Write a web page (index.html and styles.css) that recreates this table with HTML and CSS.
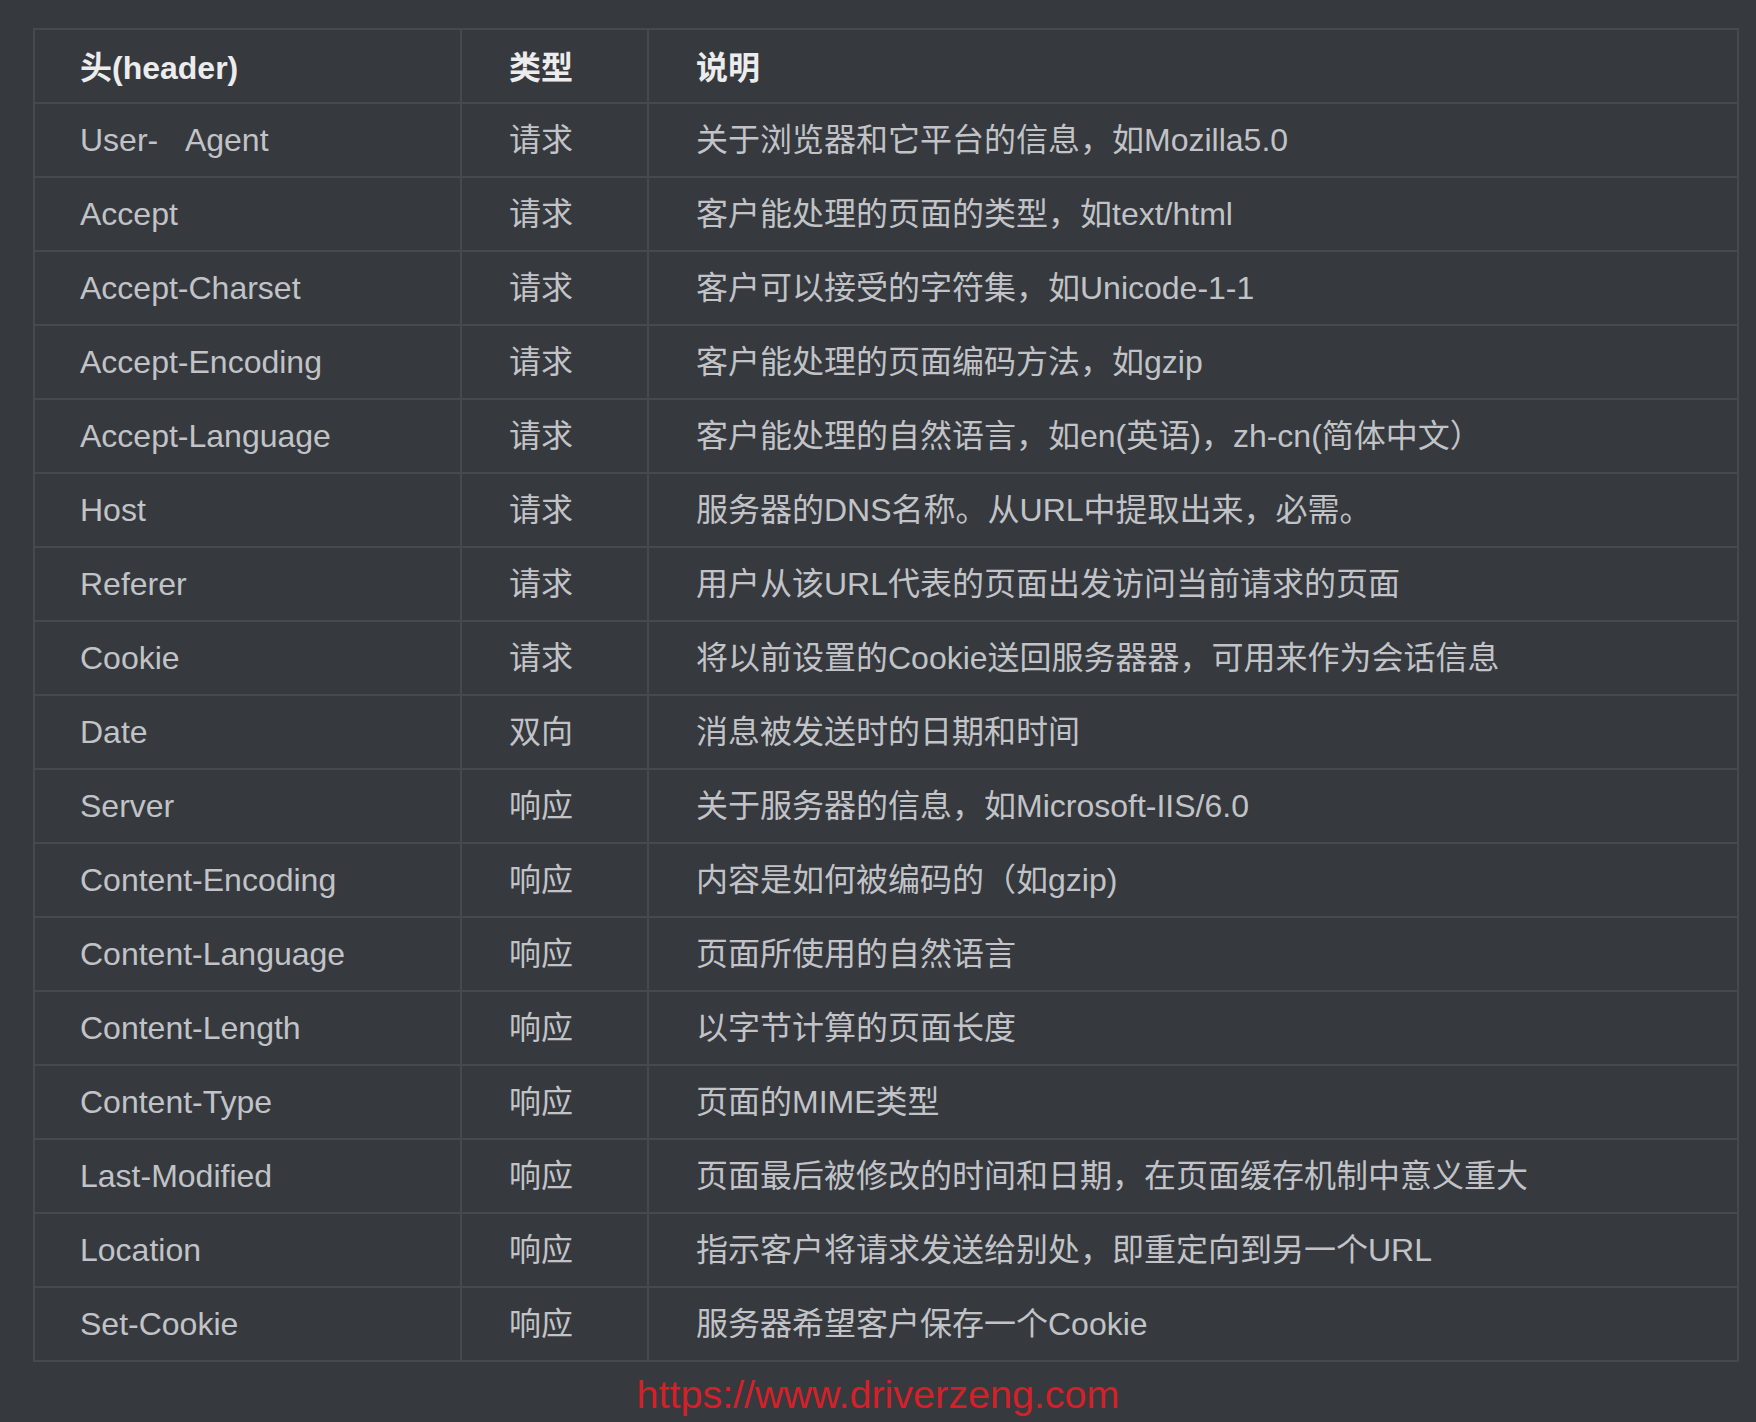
FILE: index.html
```html
<!DOCTYPE html>
<html lang="zh-CN">
<head>
<meta charset="utf-8">
<title>HTTP 头</title>
<link rel="stylesheet" href="styles.css">
</head>
<body>
<div class="page">
  <table class="headers">
    <colgroup>
      <col class="c1"><col class="c2"><col class="c3">
    </colgroup>
    <thead>
      <tr><th>头(header)</th><th>类型</th><th>说明</th></tr>
    </thead>
    <tbody>
      <tr><td>User-&nbsp;&nbsp;&nbsp;Agent</td><td>请求</td><td>关于浏览器和它平台的信息，如Mozilla5.0</td></tr>
      <tr><td>Accept</td><td>请求</td><td>客户能处理的页面的类型，如text/html</td></tr>
      <tr><td>Accept-Charset</td><td>请求</td><td>客户可以接受的字符集，如Unicode-1-1</td></tr>
      <tr><td>Accept-Encoding</td><td>请求</td><td>客户能处理的页面编码方法，如gzip</td></tr>
      <tr><td>Accept-Language</td><td>请求</td><td>客户能处理的自然语言，如en(英语)，zh-cn(简体中文）</td></tr>
      <tr><td>Host</td><td>请求</td><td>服务器的DNS名称。从URL中提取出来，必需。</td></tr>
      <tr><td>Referer</td><td>请求</td><td>用户从该URL代表的页面出发访问当前请求的页面</td></tr>
      <tr><td>Cookie</td><td>请求</td><td>将以前设置的Cookie送回服务器器，可用来作为会话信息</td></tr>
      <tr><td>Date</td><td>双向</td><td>消息被发送时的日期和时间</td></tr>
      <tr><td>Server</td><td>响应</td><td>关于服务器的信息，如Microsoft-IIS/6.0</td></tr>
      <tr><td>Content-Encoding</td><td>响应</td><td>内容是如何被编码的（如gzip)</td></tr>
      <tr><td>Content-Language</td><td>响应</td><td>页面所使用的自然语言</td></tr>
      <tr><td>Content-Length</td><td>响应</td><td>以字节计算的页面长度</td></tr>
      <tr><td>Content-Type</td><td>响应</td><td>页面的MIME类型</td></tr>
      <tr><td>Last-Modified</td><td>响应</td><td>页面最后被修改的时间和日期，在页面缓存机制中意义重大</td></tr>
      <tr><td>Location</td><td>响应</td><td>指示客户将请求发送给别处，即重定向到另一个URL</td></tr>
      <tr><td>Set-Cookie</td><td>响应</td><td>服务器希望客户保存一个Cookie</td></tr>
    </tbody>
  </table>
</div>
<div class="watermark">https://www.driverzeng.com</div>
</body>
</html>
```
FILE: styles.css
```css
html, body {
  margin: 0;
  padding: 0;
  background: #36393e;
}
body {
  font-family: "Liberation Sans", "Noto Sans CJK SC", sans-serif;
  width: 1756px;
  height: 1422px;
  overflow: hidden;
}
.page {
  padding: 28px 0 0 33px;
}
.headers {
  border-collapse: collapse;
  width: 1706px;
  table-layout: fixed;
}
.c1 { width: 427px; }
.c2 { width: 187px; }
.c3 { width: auto; }
.headers th,
.headers td {
  border: 2px solid #46494f;
  height: 74px;
  padding: 0 0 0 47px;
  text-align: left;
  vertical-align: middle;
  font-size: 32px;
  line-height: 40px;
  white-space: nowrap;
  box-sizing: border-box;
}
.headers th:first-child,
.headers td:first-child {
  padding-left: 45px;
}
.headers th {
  color: #ececec;
  font-weight: bold;
  padding-top: 4px;
}
.headers td {
  color: #c1c3c7;
  font-weight: normal;
}
.watermark {
  margin-top: 10px;
  text-align: center;
  font-size: 39.5px;
  color: #d42029;
  line-height: 45px;
}
```
